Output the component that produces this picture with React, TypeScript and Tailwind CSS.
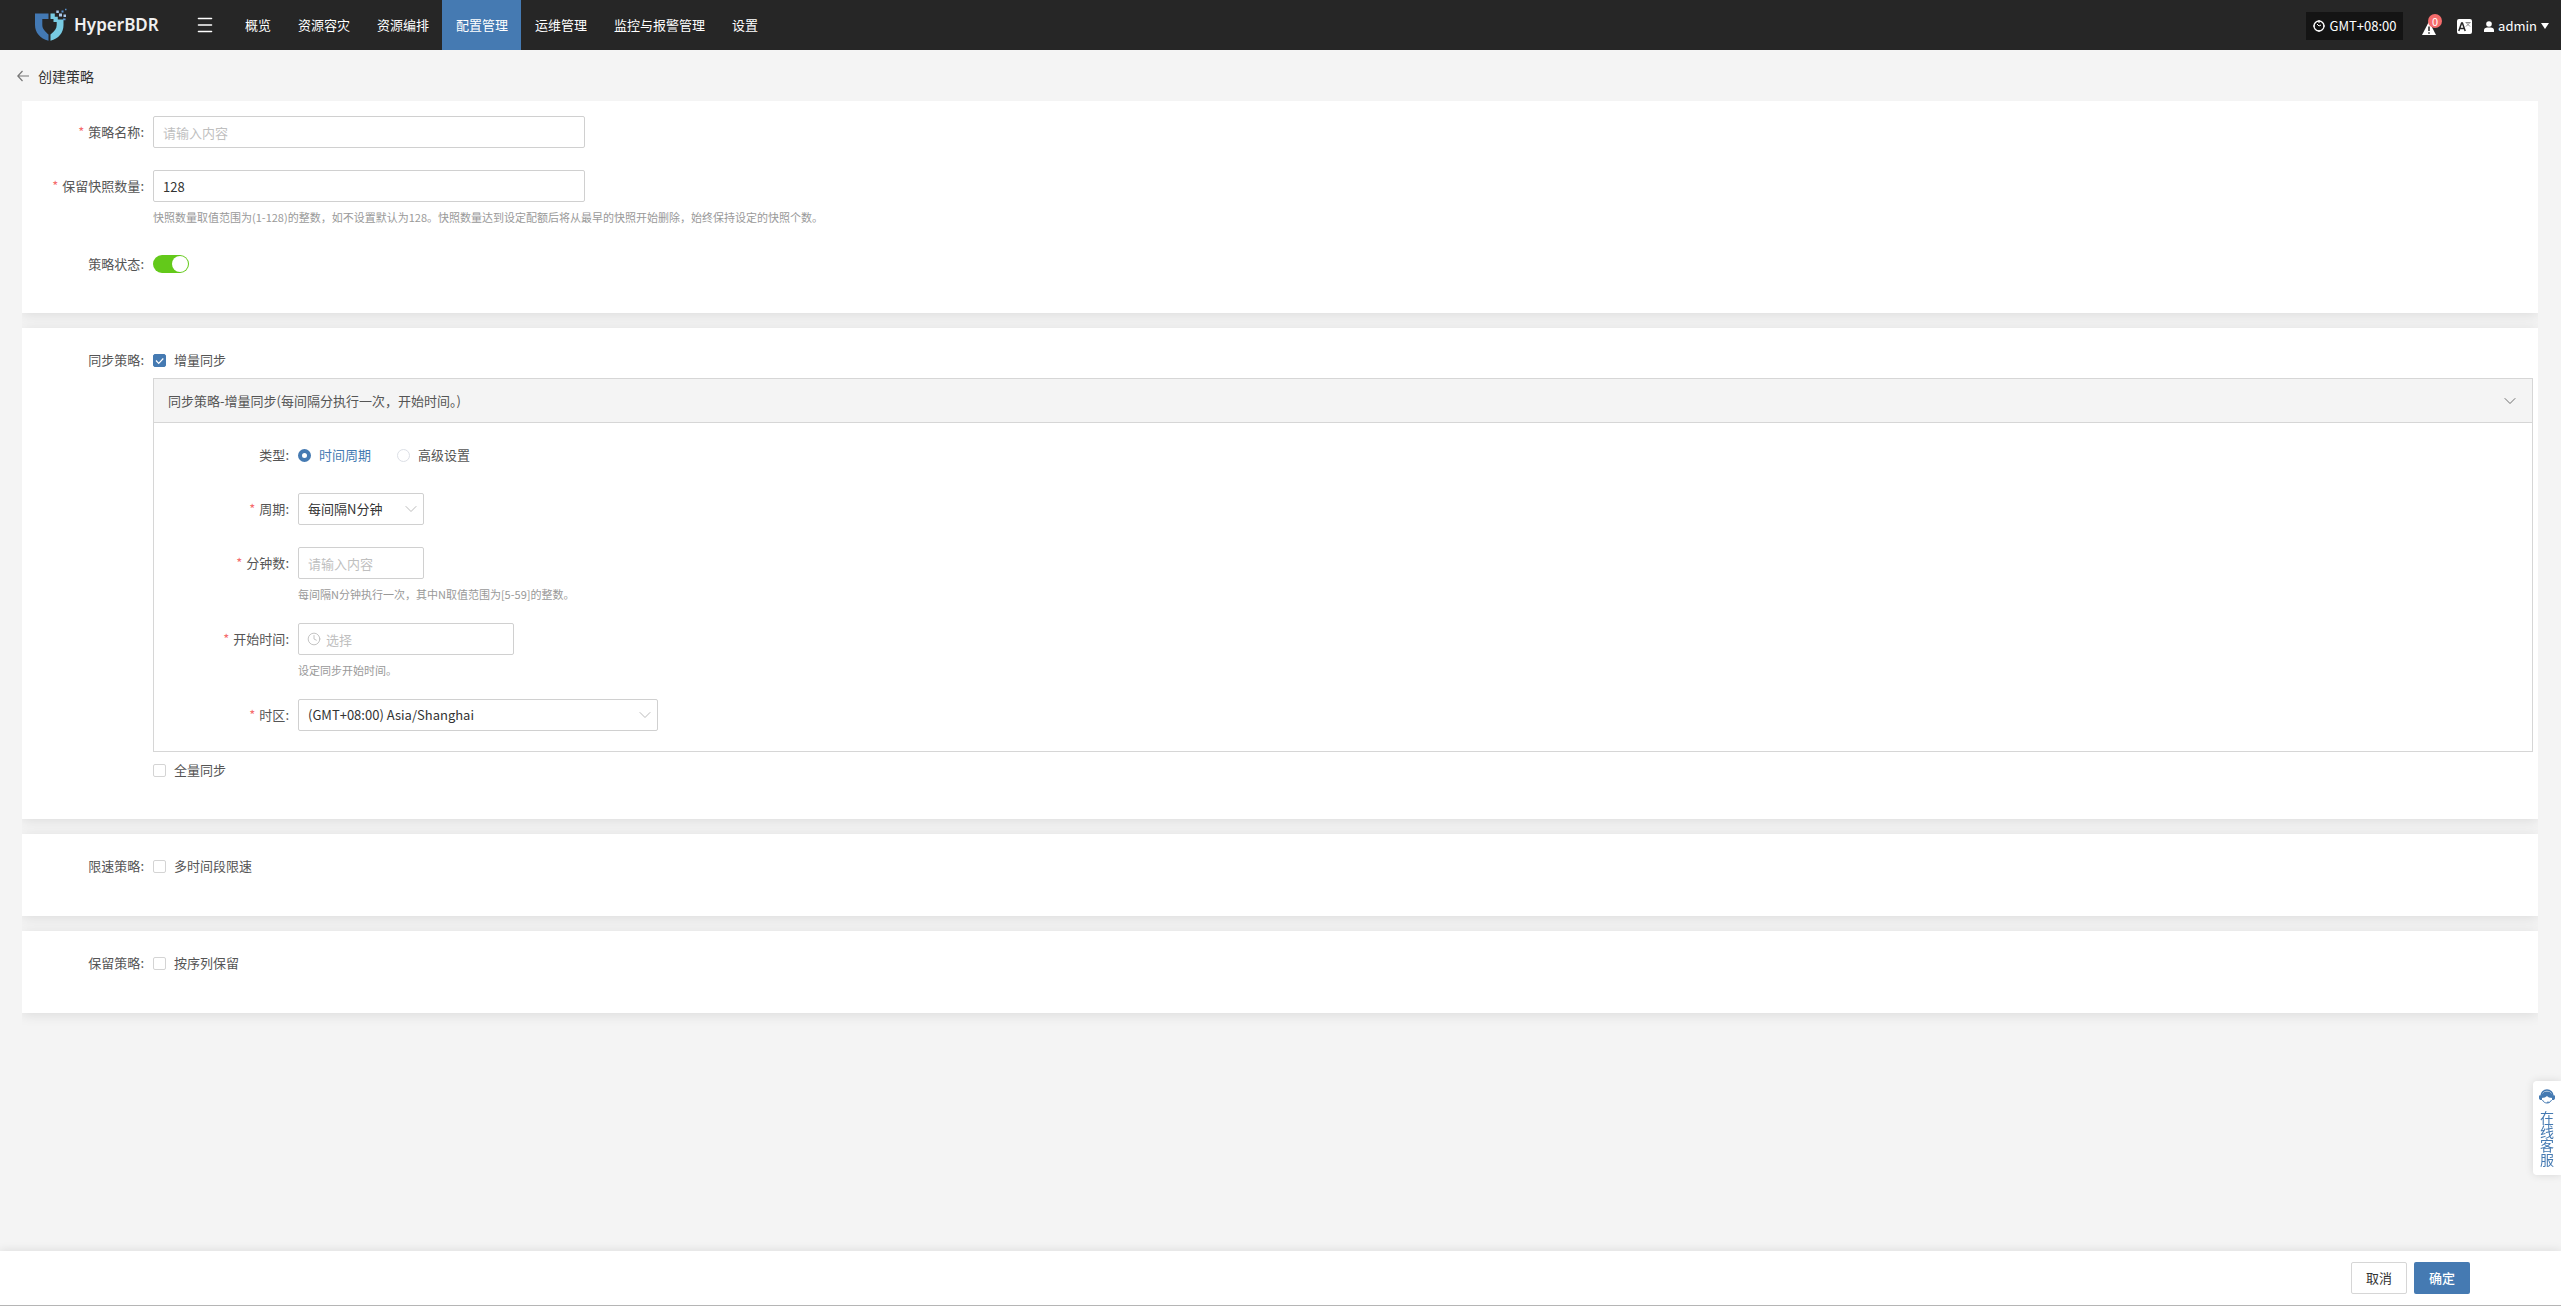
import { useState, type ReactNode } from "react";
import { ChevronDown, Clock } from "lucide-react";

const navItems = ["概览", "资源容灾", "资源编排", "配置管理", "运维管理", "监控与报警管理", "设置"];

function Logo() {
  return (
    <svg width="32" height="34" viewBox="0 0 32 34" aria-hidden="true">
      <path d="M0 5.500h13.500v5.500H7.300v6c0 3.800 3 6.500 6.200 9.500v6.300C5 30.500 0 24.500 0 17Z" fill="#4379b4" />
      <path d="M15.500 5.500h4.300v3.300h3v2.700h5.700v5.500c0 8-5 13.500-13 15.800v-6.300c4.300-3.500 6.200-6 6.200-9.500v-3h-3.200v-3h-3Z" fill="#78cbe2" />
      <path d="M21.300 2.500h2.500V5h-2.500zM24 5.500h3v3h-3zM28.500 6.500H31V9h-2.500z" fill="#a9c8ea" />
      <path d="M26.500 2.500h2v2h-2zM30 .8h1.500v1.500H30zM28 10.500h2.500v1.800H28z" fill="#5b93cf" />
    </svg>
  );
}

function Header() {
  return (
    <header className="flex h-[50px] items-center bg-[#262626] pr-3 text-[13px] text-white">
      <a href="#" className="ml-[35px] flex w-[148px] items-center gap-[7px] font-['Noto_Sans',sans-serif] text-[17px] font-semibold text-[#f0f0f0]">
        <Logo />
        HyperBDR
      </a>
      <button aria-label="菜单" className="mr-1 flex w-11 justify-center">
        <svg width="16" height="16" viewBox="0 0 16 16" stroke="#fff" strokeWidth="1.600" strokeLinecap="round" aria-hidden="true">
          <path d="M1.500 1.500h13M1.500 8h13M1.500 14.500h13" />
        </svg>
      </button>
      <nav className="flex h-full">
        {navItems.map((t) => (
          <a key={t} href="#" className={"flex items-center pr-[13px] pl-3.5 " + (t === "配置管理" ? "bg-[#457ab2]" : "")}>
            {t}
          </a>
        ))}
      </nav>
      <div className="ml-auto flex items-center">
        <button className="mt-0.5 flex h-7 w-[97px] items-center justify-center gap-[5px] bg-[#141414]">
          <svg width="12" height="12" viewBox="0 0 12 12" fill="none" stroke="#fff" aria-hidden="true">
            <circle cx="6" cy="6" r="5" strokeWidth="1.300" />
            <path d="M6 0v3M0 6h2M10 6h2M6 12v-2M4 4l2 2 2-1" />
          </svg>
          GMT+08:00
        </button>
        <button aria-label="报警" className="relative mt-1 ml-[19px]">
          <svg width="14" height="18" viewBox="0 0 14 18" aria-hidden="true">
            <path d="M7 3.500 14 17H0Z" fill="#fff" />
            <path d="M7 8.500v4.500M7 14.200v1.600" stroke="#262626" strokeWidth="1.500" />
          </svg>
          <span className="absolute -top-1 left-1.5 flex size-3.5 items-center justify-center rounded-full bg-[#f56c6c] text-[11px] leading-none">0</span>
        </button>
        <button aria-label="语言" className="mt-0.5 ml-[21px]">
          <svg width="15" height="15" viewBox="0 0 15 15" aria-hidden="true">
            <rect width="15" height="15" rx="2" fill="#fff" />
            <path d="M1.800 12 4.600 4h.8l2.800 8M3 9.500h4" fill="none" stroke="#262626" strokeWidth="1.500" />
            <path d="M8.500 3.500h5M9 7.500l4-4M9.500 4l3.500 3.500" fill="none" stroke="#888" />
          </svg>
        </button>
        <button className="mt-0.5 ml-3 flex items-center gap-1">
          <svg width="10" height="11" viewBox="0 0 10 11" fill="#fff" aria-hidden="true">
            <circle cx="5" cy="3" r="2.800" />
            <path d="M0 11V9c0-2 2-2.500 5-2.500s5 .5 5 2.500v2Z" />
          </svg>
          admin
          <svg width="8" height="6" viewBox="0 0 8 6" aria-hidden="true">
            <path d="M0 0h8L4 6Z" fill="#fff" />
          </svg>
        </button>
      </div>
    </header>
  );
}

function Card({ children }: { children: ReactNode }) {
  return <section className="bg-white pr-[5px] shadow-[0_2px_12px_rgba(0,0,0,0.1)]">{children}</section>;
}

function Row({ label, id, required, wide, hint, children }: { label: string; id?: string; required?: boolean; wide?: boolean; hint?: string; children: ReactNode }) {
  return (
    <div className="flex items-start">
      <label htmlFor={id} className={"flex h-8 shrink-0 items-center justify-end gap-1 pr-[9px] " + (wide ? "w-36" : "w-[131px]")}>
        {required && <span className="text-[#f56c6c]">*</span>}
        {label}:
      </label>
      <div className="min-w-0 flex-1">
        {children}
        {hint && <p className="mt-[9px] text-[11px] leading-[13px] text-[#999]">{hint}</p>}
      </div>
    </div>
  );
}

function Check({ label, checked = false }: { label: string; checked?: boolean }) {
  const [on, setOn] = useState(checked);
  return (
    <label className="flex h-8 w-fit items-center gap-2">
      <span className="relative flex size-[13px]">
        <input type="checkbox" checked={on} onChange={() => setOn(!on)} className="peer size-[13px] appearance-none rounded-[2px] border border-[#d4d4d4] bg-white checked:border-[#457ab2] checked:bg-[#457ab2]" />
        <svg viewBox="0 0 13 13" className="pointer-events-none absolute inset-0 hidden peer-checked:block" fill="none" stroke="#fff" strokeWidth="1.200" aria-hidden="true">
          <path d="m3 6.500 2.700 2.800L10.300 4.500" />
        </svg>
      </span>
      {label}
    </label>
  );
}

function Radio({ label, checked }: { label: string; checked?: boolean }) {
  return (
    <label className="flex items-center gap-2 has-checked:text-[#457ab2]">
      <input type="radio" name="type" defaultChecked={checked} className="size-[13px] appearance-none rounded-full border border-[#dcdfe6] bg-white checked:border-4 checked:border-[#457ab2]" />
      {label}
    </label>
  );
}

const field = "h-8 rounded-[2px] border border-[#d0d0d0] bg-white text-[13px] text-[#333] outline-none placeholder:text-[#bfbfbf]";

function Select({ id, option, className }: { id: string; option: string; className: string }) {
  return (
    <div className={"relative " + className}>
      <select id={id} className={field + " w-full appearance-none px-[9px]"}>
        <option>{option}</option>
      </select>
      <ChevronDown size={20} strokeWidth={1.200} className="pointer-events-none absolute top-1.5 right-[3px] text-[#bbb]" />
    </div>
  );
}

export default function App() {
  return (
    <div className="flex min-h-screen flex-col bg-[#f4f4f4] font-['Noto_Sans_CJK_SC',sans-serif] text-[13px] text-[#555]">
      <Header />
      <main className="flex-1">
        <div className="flex h-[51px] items-center gap-[9px] pl-[17px] text-sm text-[#333]">
          <a href="#" aria-label="返回">
            <svg width="12" height="12" viewBox="0 0 12 12" fill="none" stroke="#777" strokeWidth="1.200" aria-hidden="true">
              <path d="M12 6H.8M5.500 1 .8 6l4.700 5" />
            </svg>
          </a>
          <h1>创建策略</h1>
        </div>
        <div className="mr-[23px] ml-[22px] flex flex-col gap-[15px] overflow-hidden pb-4">
          <Card>
            <div className="flex flex-col pt-[15px] pb-[33px]">
              <Row label="策略名称" id="name" required>
                <input id="name" placeholder="请输入内容" className={field + " block w-[432px] px-[9px]"} />
              </Row>
              <div className="mt-[22px]">
                <Row label="保留快照数量" id="count" required hint="快照数量取值范围为(1-128)的整数，如不设置默认为128。快照数量达到设定配额后将从最早的快照开始删除，始终保持设定的快照个数。">
                  <input id="count" defaultValue="128" className={field + " block w-[432px] px-[9px]"} />
                </Row>
              </div>
              <div className="mt-6">
                <Row label="策略状态" id="state">
                  <div className="flex h-8 items-center">
                    <input id="state" type="checkbox" role="switch" defaultChecked className="relative h-[18px] w-9 appearance-none rounded-full bg-[#ccc] after:absolute after:top-px after:left-px after:size-4 after:rounded-full after:bg-white checked:bg-[#63c91a] checked:after:left-[19px]" />
                  </div>
                </Row>
              </div>
            </div>
          </Card>
          <Card>
            <div className="pt-4 pb-[33px]">
              <Row label="同步策略">
                <Check label="增量同步" checked />
                <div className="mt-0.5 border border-[#d6d6d6]">
                  <button className="flex h-11 w-full items-center justify-between border-b border-[#d6d6d6] bg-[#f4f4f4] pr-3 pl-3.5">
                    同步策略-增量同步(每间隔分执行一次，开始时间。)
                    <ChevronDown size={20} strokeWidth={1} />
                  </button>
                  <div className="flex flex-col gap-[22px] pt-4 pb-5">
                    <Row label="类型" wide>
                      <div className="flex h-8 items-center gap-[26px]">
                        <Radio label="时间周期" checked />
                        <Radio label="高级设置" />
                      </div>
                    </Row>
                    <Row label="周期" id="cycle" required wide>
                      <Select id="cycle" option="每间隔N分钟" className="w-[126px]" />
                    </Row>
                    <Row label="分钟数" id="minutes" required wide hint="每间隔N分钟执行一次，其中N取值范围为[5-59]的整数。">
                      <input id="minutes" placeholder="请输入内容" className={field + " block w-[126px] px-[9px]"} />
                    </Row>
                    <Row label="开始时间" id="start" required wide hint="设定同步开始时间。">
                      <div className="relative w-[216px]">
                        <Clock size={14} strokeWidth={1.500} className="absolute top-[9px] left-[9px] text-[#bbb]" />
                        <input id="start" placeholder="选择" className={field + " block w-full pr-[9px] pl-[27px]"} />
                      </div>
                    </Row>
                    <Row label="时区" id="zone" required wide>
                      <Select id="zone" option="(GMT+08:00) Asia/Shanghai" className="w-[360px]" />
                    </Row>
                  </div>
                </div>
                <div className="mt-0.5">
                  <Check label="全量同步" />
                </div>
              </Row>
            </div>
          </Card>
          <Card>
            <div className="pt-4 pb-[34px]">
              <Row label="限速策略"><Check label="多时间段限速" /></Row>
            </div>
          </Card>
          <Card>
            <div className="pt-4 pb-[34px]">
              <Row label="保留策略"><Check label="按序列保留" /></Row>
            </div>
          </Card>
        </div>
      </main>
      <button className="fixed right-0 bottom-[131px] flex w-7 flex-col items-center rounded-l bg-white py-2 text-sm text-[#457ab2] shadow-[0_0_8px_rgba(0,0,0,0.12)]">
        <svg width="16" height="16" viewBox="0 0 16 16" aria-hidden="true" className="mb-1.5">
          <path d="M2 7a6 6 0 0 1 12 0" fill="none" stroke="#457ab2" strokeWidth="1.500" />
          <path d="M0 6.500h3V11H1L0 9.500ZM13 6.500h3v3L15 11h-2ZM2.500 9C2 4 5 2.500 8 2.500S14 4 13.500 9c-3 0-4.500-.8-5.500-2-1.200 1.200-3 2-5.500 2Z" fill="#457ab2" />
          <path d="M3.500 11c1.500 4 7.500 4 9 0M8 13.200h2.500" fill="none" stroke="#457ab2" />
        </svg>
        <span className="[writing-mode:vertical-rl]">在线客服</span>
      </button>
      <footer className="flex h-[55px] items-center justify-end gap-[7px] border-b border-[#b5b5b5] bg-white pr-[91px] shadow-[0_-2px_8px_rgba(0,0,0,0.08)]">
        <button className="h-8 w-14 rounded-[2px] border border-[#d6d6d6] text-[#333]">取消</button>
        <button className="h-8 w-14 rounded-[2px] bg-[#457ab2] font-medium text-white">确定</button>
      </footer>
    </div>
  );
}
